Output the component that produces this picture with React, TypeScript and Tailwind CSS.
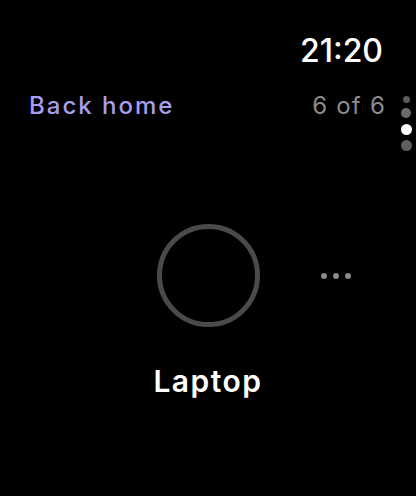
import React from "react";

export default function App() {
  return (
    <div
      className="w-[416px] h-[496px] bg-black relative overflow-hidden flex flex-col"
      style={{ fontFamily: "Inter, 'Noto Sans', sans-serif" }}
    >
      <div className="flex justify-end pr-[33px] pt-[33px] h-[76px]">
        <span className="text-white text-[32px] leading-[36px] font-medium">21:20</span>
      </div>
      <div className="flex items-center justify-between pl-[29px] pr-[30px] h-[60px]">
        <span className="text-[#a89ef0] text-[24px] leading-[30px] font-medium tracking-[2px]">Back home</span>
        <span className="text-[#8c8c8c] text-[24px] leading-[30px] tracking-[1.2px]">6 of 6</span>
      </div>
      <div className="absolute left-[400px] top-[96px] flex flex-col items-center w-[12px]">
        <div className="w-[7px] h-[7px] rounded-full bg-[#5a5a5a]" />
        <div className="w-[10px] h-[10px] rounded-full bg-[#6b6b6b] mt-[5px]" />
        <div className="w-[11px] h-[11px] rounded-full bg-white mt-[6px]" />
        <div className="w-[11px] h-[11px] rounded-full bg-[#5f5f5f] mt-[5px]" />
      </div>
      <div className="flex flex-col items-center mt-[88px]">
        <div className="w-[103px] h-[103px] rounded-full border-[5px] border-[#4a4a4a]" />
        <span className="text-white text-[30px] leading-[36px] font-semibold tracking-[1.5px] mt-[36px]">Laptop</span>
      </div>
      <div className="absolute left-[321px] top-[273px] flex gap-[6px]">
        <div className="w-[6px] h-[6px] rounded-full bg-[#8a8a8a]" />
        <div className="w-[6px] h-[6px] rounded-full bg-[#8a8a8a]" />
        <div className="w-[6px] h-[6px] rounded-full bg-[#8a8a8a]" />
      </div>
    </div>
  );
}
